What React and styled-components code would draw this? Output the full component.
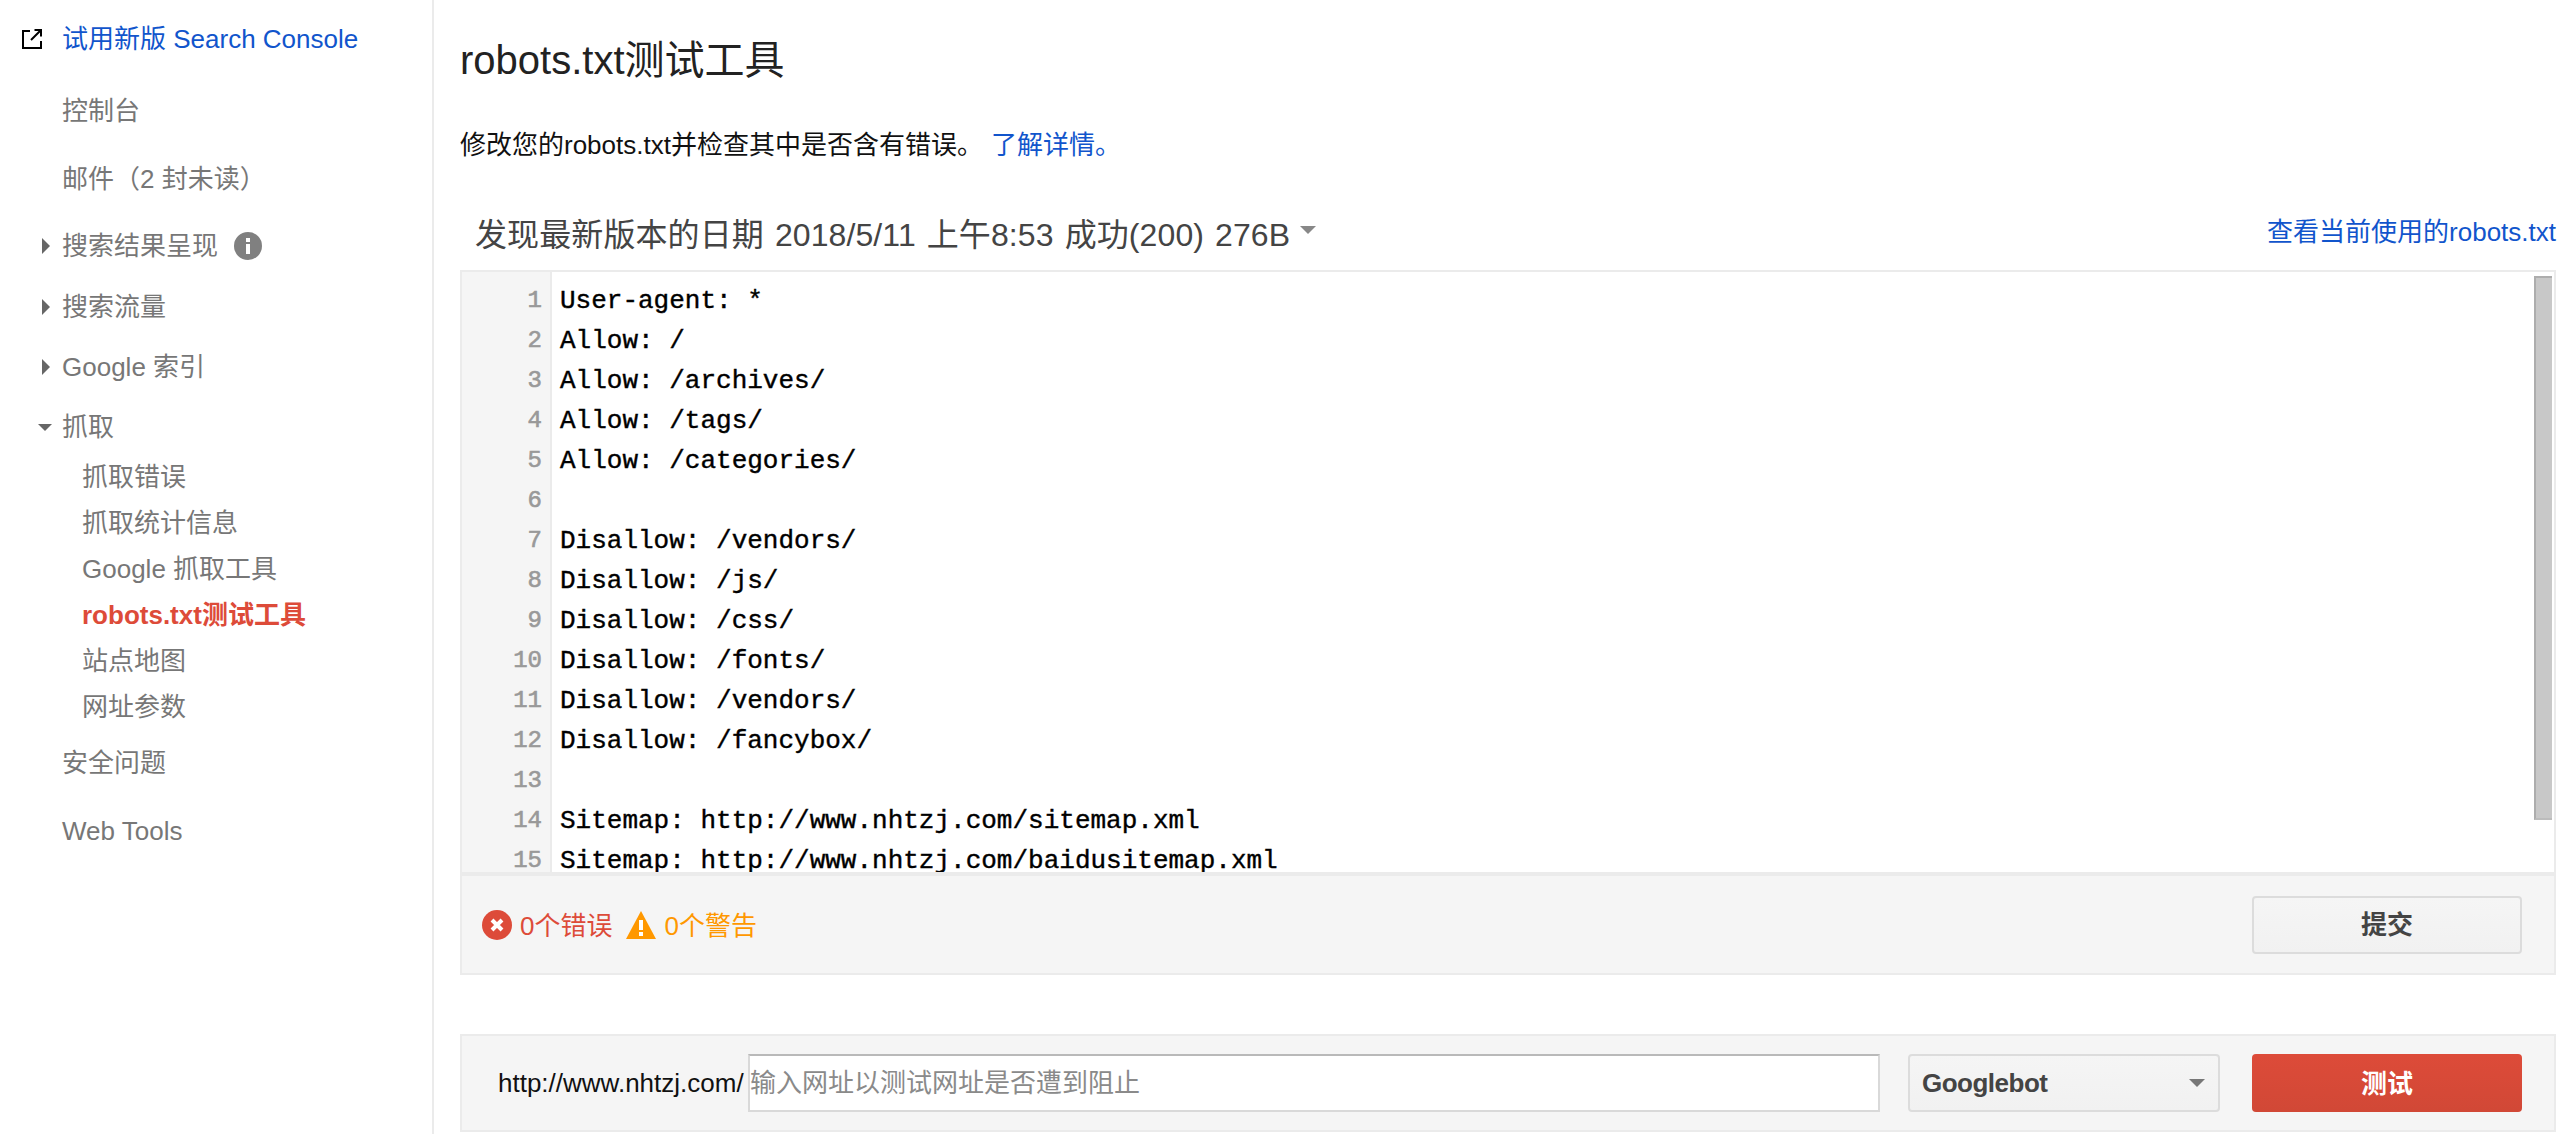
import React from 'react';
import styled, { createGlobalStyle } from 'styled-components';

const GlobalStyle = createGlobalStyle`
  html, body {
    margin: 0;
    padding: 0;
    background: #fff;
  }
  * {
    box-sizing: border-box;
  }
`;

const sans = `"Liberation Sans", "Noto Sans CJK SC", sans-serif`;

const Page = styled.div`
  display: flex;
  width: 2572px;
  height: 1134px;
  overflow: hidden;
  font-family: ${sans};
  font-size: 26px;
  background: #fff;
`;

const Sidebar = styled.nav`
  display: flex;
  flex-direction: column;
  flex: none;
  width: 434px;
  padding-top: 13px;
  border-right: 2px solid #ebebeb;
`;

const NavRow = styled.div`
  display: flex;
  align-items: center;
  height: 46px;
  margin-top: ${p => p.$gap || 0}px;
  padding-left: ${p => (p.$sub ? 82 : 62)}px;
  color: ${p => (p.$active ? '#dd4b39' : p.$link ? '#1155cc' : '#777')};
  font-weight: ${p => (p.$active ? 700 : 400)};
  white-space: nowrap;
`;

/* sits in the left margin of the row, the right edge is what lines up */
const NavIcon = styled.span`
  display: flex;
  flex: none;
  justify-content: flex-end;
  align-items: center;
  width: ${p => p.$width || 30}px;
  margin-top: 6px;
  margin-left: -42px;
  margin-right: ${p => 42 - (p.$width || 30)}px;
`;

const InfoBadge = styled.svg`
  display: block;
  width: 28px;
  height: 28px;
  margin-top: 6px;
  margin-left: 16px;
`;

const Main = styled.main`
  flex: 1;
  min-width: 0;
  padding: 0 16px 0 26px;
`;

const Title = styled.h1`
  margin: 0;
  padding-top: 34px;
  height: 86px;
  font-size: 40px;
  line-height: 52px;
  font-weight: 400;
  color: #222;
`;

const Intro = styled.p`
  margin: 0;
  height: 106px;
  padding-top: 44px;
  line-height: 30px;
  color: #111;
`;

const Link = styled.a`
  color: #1155cc;
  text-decoration: none;
`;

const IntroLink = styled(Link)`
  margin-left: 8px;
`;

const VersionRow = styled.div`
  display: flex;
  justify-content: space-between;
  align-items: center;
  height: 78px;
  padding: 0 0 4px 15px;
`;

const VersionLabel = styled.div`
  display: flex;
  align-items: center;
  margin-top: 6px;
  font-size: 32px;
  word-spacing: 2px;
  letter-spacing: 0.1px;
  color: #444;
  white-space: nowrap;
`;

const Caret = styled.span`
  display: inline-block;
  width: 0;
  height: 0;
  margin-left: ${p => p.$gap || 0}px;
  margin-bottom: ${p => p.$lift || 0}px;
  border-left: ${p => p.$size || 8}px solid transparent;
  border-right: ${p => p.$size || 8}px solid transparent;
  border-top: ${p => p.$size || 8}px solid ${p => p.$color || '#777'};
`;

const Editor = styled.div`
  position: relative;
  display: flex;
  height: 606px;
  border: 2px solid #ebebeb;
  border-bottom-width: 4px;
  overflow: hidden;
`;

const Gutter = styled.div`
  flex: none;
  width: 90px;
  padding: 9px 8px 0 0;
  background: #f5f5f5;
  border-right: 2px solid #ebebeb;
  font-family: "Liberation Mono", monospace;
  font-size: 24px;
  -webkit-text-stroke: 0.6px #999;
  line-height: 40px;
  color: #999;
  text-align: right;
`;

const Code = styled.pre`
  flex: 1;
  margin: 0;
  padding: 9px 0 0 8px;
  font-family: "Liberation Mono", monospace;
  font-size: 26px;
  -webkit-text-stroke: 0.4px #000;
  line-height: 40px;
  color: #000;
`;

const ScrollThumb = styled.div`
  position: absolute;
  top: 4px;
  right: 2px;
  width: 18px;
  height: 544px;
  background: #c8c8c8;
  border-top: 2px solid #adadad;
  border-left: 2px solid #adadad;
  border-bottom: 2px solid #bcbcbc;
`;

const Panel = styled.div`
  display: flex;
  align-items: center;
  background: #f5f5f5;
  border: 2px solid #ebebeb;
  border-top-width: ${p => (p.$flushTop ? 0 : 2)}px;
  height: ${p => p.$height}px;
  margin-top: ${p => p.$gap || 0}px;
`;

const Status = styled.div`
  display: flex;
  align-items: center;
  flex: 1;
  padding-left: 20px;
  white-space: nowrap;
`;

const StatusText = styled.span`
  margin: 0 14px 2px 8px;
  color: ${p => p.$color};
`;

const Button = styled.button`
  flex: none;
  width: 270px;
  height: 58px;
  margin-left: 32px;
  margin-right: 32px;
  padding: 0 0 4px;
  font-family: ${sans};
  font-size: 26px;
  font-weight: 700;
  border-radius: 4px;
  color: ${p => (p.$primary ? '#fff' : '#444')};
  background: ${p => (p.$primary ? 'linear-gradient(#dd4b39, #d14836)' : 'linear-gradient(#f5f5f5, #f1f1f1)')};
  border: ${p => (p.$primary ? 'none' : '2px solid #dcdcdc')};
`;

const UrlPrefix = styled.span`
  flex: none;
  margin-left: 36px;
  width: 250px;
  color: #111;
  white-space: nowrap;
`;

const UrlInput = styled.input`
  flex: none;
  width: 1132px;
  height: 58px;
  padding: 0;
  font-family: ${sans};
  font-size: 26px;
  background: #fff;
  border: 2px solid #d9d9d9;
  border-top-color: #b9b9b9;
  outline: none;

  &::placeholder {
    color: #8a8a8a;
    opacity: 1;
  }
`;

const Select = styled.div`
  display: flex;
  flex: none;
  justify-content: space-between;
  align-items: center;
  width: 312px;
  height: 58px;
  margin-left: 28px;
  padding: 0 13px 0 12px;
  font-weight: 700;
  letter-spacing: -0.5px;
  color: #444;
  background: linear-gradient(#f5f5f5, #f1f1f1);
  border: 2px solid #dcdcdc;
  border-radius: 4px;
`;

const sidebarItems = [
  { label: '控制台', gap: 26 },
  { label: '邮件（2 封未读）', gap: 22 },
  { label: '搜索结果呈现', gap: 21, arrow: 'right', info: true },
  { label: '搜索流量', gap: 15, arrow: 'right' },
  { label: 'Google 索引', gap: 14, arrow: 'right' },
  { label: '抓取', gap: 14, arrow: 'down' },
  { label: '抓取错误', gap: 4, sub: true },
  { label: '抓取统计信息', sub: true },
  { label: 'Google 抓取工具', sub: true },
  { label: 'robots.txt测试工具', sub: true, active: true },
  { label: '站点地图', sub: true },
  { label: '网址参数', sub: true },
  { label: '安全问题', gap: 10 },
  { label: 'Web Tools', gap: 25 },
];

const codeLines = [
  'User-agent: *',
  'Allow: /',
  'Allow: /archives/',
  'Allow: /tags/',
  'Allow: /categories/',
  '',
  'Disallow: /vendors/',
  'Disallow: /js/',
  'Disallow: /css/',
  'Disallow: /fonts/',
  'Disallow: /vendors/',
  'Disallow: /fancybox/',
  '',
  'Sitemap: http://www.nhtzj.com/sitemap.xml',
  'Sitemap: http://www.nhtzj.com/baidusitemap.xml',
];

const ExternalIcon = () => (
  <svg width="20" height="20" viewBox="0 0 20 20" fill="none" stroke="#000" strokeWidth="2">
    <path d="M8 2H1v17h18v-7" />
    <path d="M9 11 18.5 1.5M12.5 1H19v6.5" />
  </svg>
);

const ErrorIcon = () => (
  <svg width="30" height="30" viewBox="0 0 30 30">
    <circle cx="15" cy="15" r="15" fill="#dd4b39" />
    <path d="M10 10l10 10M20 10 10 20" stroke="#fff" strokeWidth="4" />
  </svg>
);

const WarningIcon = () => (
  <svg width="30" height="28" viewBox="0 0 30 28">
    <path d="M15 0 30 28H0z" fill="#ff9800" />
    <path d="M15 9v10M15 21v4" stroke="#fff" strokeWidth="4" />
  </svg>
);

const App = () => (
  <>
    <GlobalStyle />
    <Page>
      <Sidebar>
        <NavRow $link>
          <NavIcon $width={22}><ExternalIcon /></NavIcon>
          试用新版 Search Console
        </NavRow>
        {sidebarItems.map(item => (
          <NavRow key={item.label} $gap={item.gap} $sub={item.sub} $active={item.active}>
            {item.arrow === 'right' && (
              <NavIcon>
                <svg width="8" height="16" viewBox="0 0 8 16"><path d="M0 0l8 8-8 8z" fill="#666" /></svg>
              </NavIcon>
            )}
            {item.arrow === 'down' && (
              <NavIcon $width={32}><Caret $size={7} $color="#666" /></NavIcon>
            )}
            {item.label}
            {item.info && (
              <InfoBadge viewBox="0 0 28 28">
                <circle cx="14" cy="14" r="14" fill="#808080" />
                <path d="M14 6v4M14 12v10" stroke="#fff" strokeWidth="4" />
              </InfoBadge>
            )}
          </NavRow>
        ))}
      </Sidebar>
      <Main>
        <Title>robots.txt测试工具</Title>
        <Intro>
          修改您的robots.txt并检查其中是否含有错误。<IntroLink href="#">了解详情。</IntroLink>
        </Intro>
        <VersionRow>
          <VersionLabel>
            发现最新版本的日期 2018/5/11 上午8:53 成功(200) 276B
            <Caret $gap={10} $size={8} $lift={4} $color="#888" />
          </VersionLabel>
          <Link href="#">查看当前使用的robots.txt</Link>
        </VersionRow>
        <Editor>
          <Gutter>
            {codeLines.map((_, i) => <div key={i}>{i + 1}</div>)}
          </Gutter>
          <Code>{codeLines.join('\n')}</Code>
          <ScrollThumb />
        </Editor>
        <Panel $height={99} $flushTop>
          <Status>
            <ErrorIcon />
            <StatusText $color="#dd4b39">0个错误</StatusText>
            <WarningIcon />
            <StatusText $color="#ff9800">0个警告</StatusText>
          </Status>
          <Button>提交</Button>
        </Panel>
        <Panel $height={98} $gap={59}>
          <UrlPrefix>http://www.nhtzj.com/</UrlPrefix>
          <UrlInput placeholder="输入网址以测试网址是否遭到阻止" />
          <Select>
            Googlebot
            <Caret $size={8} $color="#777" />
          </Select>
          <Button $primary>测试</Button>
        </Panel>
      </Main>
    </Page>
  </>
);

export default App;
